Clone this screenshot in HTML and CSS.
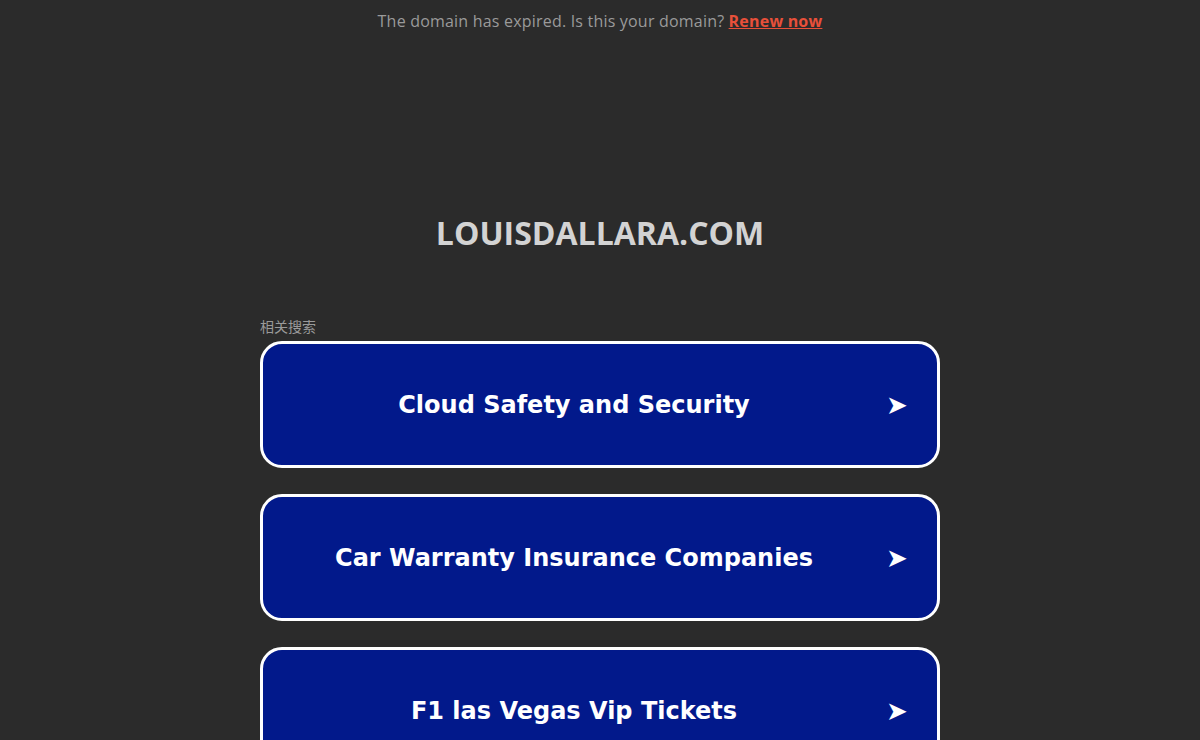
FILE: index.html
```html
<!DOCTYPE html>
<html lang="en">
<head>
<meta charset="utf-8">
<title>louisdallara.com</title>
<link rel="stylesheet" href="styles.css">
</head>
<body>
<div class="topbar">The domain has expired. Is this your domain? <a class="renew" href="#">Renew now</a></div>
<h1 class="domain">LOUISDALLARA.COM</h1>
<div class="wrap">
  <div class="label">相关搜索</div>
  <div class="list">
    <a class="item" href="#"><span class="text">Cloud Safety and Security</span><span class="arrow">➤</span></a>
    <a class="item" href="#"><span class="text">Car Warranty Insurance Companies</span><span class="arrow">➤</span></a>
    <a class="item" href="#"><span class="text">F1 las Vegas Vip Tickets</span><span class="arrow">➤</span></a>
  </div>
</div>
</body>
</html>
```
FILE: styles.css
```css
html, body {
  margin: 0;
  padding: 0;
  background: #2b2b2b;
}
body {
  font-family: "Open Sans", "Noto Sans", sans-serif;
  overflow: hidden;
  height: 740px;
}
.topbar {
  height: 42px;
  line-height: 42px;
  text-align: center;
  font-size: 16px;
  letter-spacing: 0.2px;
  color: #9a9a9a;
}
.renew {
  color: #e8503a;
  font-weight: 700;
  text-decoration: underline;
}
.domain {
  margin: 171px 0 0;
  text-align: center;
  font-size: 32px;
  line-height: 40px;
  font-weight: 700;
  color: #d3d3d3;
}
.wrap {
  width: 680px;
  margin: 64px auto 0;
}
.label {
  font-family: "Noto Sans CJK SC", sans-serif;
  font-size: 14px;
  line-height: 18px;
  color: #9a9a9a;
}
.list {
  margin-top: 6px;
  display: flex;
  flex-direction: column;
  gap: 26px;
}
.item {
  display: flex;
  align-items: center;
  height: 121px;
  border: 3px solid #ffffff;
  border-radius: 22px;
  background: #02198b;
  color: #ffffff;
  text-decoration: none;
}
.text {
  flex: 1;
  text-align: center;
  font-family: "DejaVu Sans", sans-serif;
  font-weight: 700;
  font-size: 24px;
}
.arrow {
  width: 24px;
  margin-right: 28px;
  font-family: "DejaVu Sans", sans-serif;
  font-size: 26px;
  text-align: center;
}
```
